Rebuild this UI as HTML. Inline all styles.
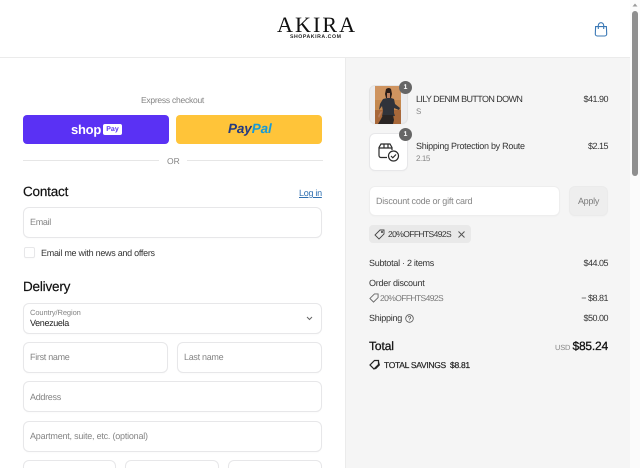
<!DOCTYPE html>
<html><head><meta charset="utf-8"><style>
html,body{margin:0;padding:0;background:#fff}
#p{position:relative;width:640px;height:468px;overflow:hidden;background:#fff;font-family:"Liberation Sans",sans-serif;color:#2a2a2a;text-rendering:geometricPrecision}
.t{position:absolute;white-space:nowrap;line-height:14px;font-size:9px;letter-spacing:-.28px}
.b{position:absolute;box-sizing:border-box;background:#fff;border:1px solid #e7e7e9;border-radius:6px;box-shadow:0 1px 1px rgba(0,0,0,.02)}
.ph{color:#858585;letter-spacing:-.3px}
.r{text-align:right;letter-spacing:-.5px}
.h{font-size:13.5px;line-height:16px;color:#111;letter-spacing:-.2px;-webkit-text-stroke:.2px #111}
.c{font-size:8.5px;letter-spacing:-.6px}
svg{position:absolute;overflow:visible}
</style></head><body><div id="p">
<div style="position:absolute;left:345px;top:57px;width:285px;height:411px;background:#f5f5f5;border-left:1px solid #ebebeb;box-sizing:border-box"></div>
<div style="position:absolute;left:0;top:57px;width:630px;height:1px;background:#ebebeb"></div>

<!-- Logo -->
<div class="t" style="left:277px;top:13px;font:22px/24px 'Liberation Serif',serif;letter-spacing:2.1px;color:#111">AKIRA</div>
<div class="t" style="left:290px;top:33px;font:bold 5.2px/8px 'Liberation Sans',sans-serif;letter-spacing:.55px;color:#222">SHOPAKIRA.COM</div>
<svg style="left:594px;top:22px" width="14" height="15" viewBox="0 0 14 15" fill="none" stroke="#3a78b5" stroke-width="1.1"><path d="M1.6 4.6h10.8l.3 7.4a2 2 0 0 1-2 2H3.3a2 2 0 0 1-2-2z"/><path d="M4.3 7V3.4a2.7 2.7 0 0 1 5.4 0V7"/></svg>

<!-- Scrollbar -->
<div style="position:absolute;left:630px;top:0;width:10px;height:468px;background:#fbfbfb"></div>
<div style="position:absolute;left:632px;top:11px;width:6px;height:165px;border-radius:3px;background:#8f8f8f"></div>
<svg style="left:632px;top:3px" width="6" height="4"><path d="M3 0.5L5.5 3.5H.5z" fill="#9a9a9a"/></svg>

<!-- Express -->
<div class="t" style="left:100px;top:93px;width:145px;text-align:center;color:#858585;font-size:8.5px;letter-spacing:-.25px">Express checkout</div>
<div style="position:absolute;left:23px;top:115px;width:146px;height:29px;background:#5a31f4;border-radius:4px"></div>
<div class="t" style="left:71px;top:121px;font:bold 13px/17px 'Liberation Sans',sans-serif;color:#fff;letter-spacing:-.25px">shop</div>
<div class="t" style="left:103px;top:124px;width:19px;height:11px;background:#fff;border-radius:2px;color:#5a31f4;font:bold 7px/11px 'Liberation Sans',sans-serif;letter-spacing:0;text-align:center">Pay</div>
<div style="position:absolute;left:176px;top:115px;width:146px;height:29px;background:#ffc439;border-radius:4px"></div>
<div class="t" style="left:228px;top:120px;font:italic bold 13.5px/18px 'Liberation Sans',sans-serif;letter-spacing:-.1px;color:#253b80">Pay<span style="color:#179bd7">Pal</span></div>

<div style="position:absolute;left:23px;top:160px;width:136px;height:1px;background:#e6e6e6"></div>
<div style="position:absolute;left:187px;top:160px;width:136px;height:1px;background:#e6e6e6"></div>
<div class="t" style="left:167px;top:154px;color:#858585;font-size:8.5px;letter-spacing:0">OR</div>

<!-- Contact -->
<div class="t h" style="left:23px;top:184px">Contact</div>
<div class="t" style="left:299px;top:186px;color:#2f6fb0;text-decoration:underline">Log in</div>
<div class="b" style="left:23px;top:207px;width:299px;height:31px"></div>
<div class="t ph" style="left:30px;top:215px">Email</div>
<div class="b" style="left:24px;top:247px;width:11px;height:11px;border-radius:2px"></div>
<div class="t" style="left:41px;top:246px;color:#333">Email me with news and offers</div>

<!-- Delivery -->
<div class="t h" style="left:23px;top:279px">Delivery</div>
<div class="b" style="left:23px;top:303px;width:299px;height:31px"></div>
<div class="t" style="left:30px;top:307px;font-size:7.5px;line-height:12px;letter-spacing:-.1px;color:#858585">Country/Region</div>
<div class="t" style="left:30px;top:316px;letter-spacing:-.35px;color:#222">Venezuela</div>
<svg style="left:306px;top:316px" width="7" height="5" fill="none" stroke="#666" stroke-width="1"><path d="M1 1l2.5 2.5L6 1"/></svg>
<div class="b" style="left:23px;top:342px;width:145px;height:31px"></div>
<div class="t ph" style="left:30px;top:350px">First name</div>
<div class="b" style="left:177px;top:342px;width:145px;height:31px"></div>
<div class="t ph" style="left:184px;top:350px">Last name</div>
<div class="b" style="left:23px;top:381px;width:299px;height:31px"></div>
<div class="t ph" style="left:30px;top:390px">Address</div>
<div class="b" style="left:23px;top:421px;width:299px;height:31px"></div>
<div class="t ph" style="left:30px;top:429px;letter-spacing:-.22px">Apartment, suite, etc. (optional)</div>
<div class="b" style="left:23px;top:460px;width:93px;height:31px"></div>
<div class="b" style="left:125px;top:460px;width:94px;height:31px"></div>
<div class="b" style="left:228px;top:460px;width:94px;height:31px"></div>

<!-- Items -->
<div class="b" style="left:369px;top:85px;width:39px;height:39px;background:#ececee;border-color:#e4e4e4;border-radius:6px"></div>
<svg style="left:375px;top:86px" width="26" height="38" viewBox="0 0 26 38">
<rect width="26" height="38" fill="#c4884f"/>
<rect width="26" height="14" fill="#cf9460"/>
<rect y="24" width="26" height="14" fill="#a8683a"/>
<path d="M11 3q3-2 5 0l1 5-1 4h-5l-1-4z" fill="#2b1d18"/>
<path d="M12 7h3v5h-3z" fill="#b97f60"/>
<path d="M8 13l4-1h4l3 1 1 5 5 4-1 2-5-2v5l1 3H7l1-5-1-5-3 4 1-6z" fill="#30333a"/>
<path d="M8 29h10l1 5-1 4H3l3-5z" fill="#2a2524"/>
<path d="M3 30l3-5 1 1-3 6z" fill="#b97f60"/>
</svg>
<div style="position:absolute;left:399px;top:81px;width:13px;height:13px;border-radius:50%;background:#666;color:#fff;font:bold 7px/13px 'Liberation Sans',sans-serif;text-align:center">1</div>

<div class="b" style="left:369px;top:133px;width:39px;height:38px;border-radius:6px"></div>
<svg style="left:378px;top:143px" width="22" height="20" viewBox="0 0 22 20" fill="none" stroke="#2b2b2b" stroke-width="1.2"><path d="M9 14.5H3a2 2 0 0 1-2-2V4.5l2-3.5h9l2 3.5V7"/><path d="M1 5h13M6 1v4h4V1"/><circle cx="15.5" cy="13" r="5"/><path d="M13 13l1.8 1.8 3.2-3.3"/></svg>
<div style="position:absolute;left:399px;top:128px;width:13px;height:13px;border-radius:50%;background:#666;color:#fff;font:bold 7px/13px 'Liberation Sans',sans-serif;text-align:center">1</div>

<div class="t" style="left:416px;top:92px;color:#333;letter-spacing:-.6px">LILY DENIM BUTTON DOWN</div>
<div class="t" style="left:416px;top:105px;font-size:8px;color:#888">S</div>
<div class="t r" style="left:548px;top:92px;width:60px;color:#333">$41.90</div>
<div class="t" style="left:416px;top:139px;color:#333">Shipping Protection by Route</div>
<div class="t" style="left:416px;top:152px;font-size:8px;letter-spacing:-.4px;color:#888">2.15</div>
<div class="t r" style="left:548px;top:139px;width:60px;color:#333">$2.15</div>

<!-- Discount -->
<div class="b" style="left:369px;top:186px;width:191px;height:30px;border-color:#eeeeee"></div>
<div class="t ph" style="left:376px;top:194px;letter-spacing:-.22px">Discount code or gift card</div>
<div class="b" style="left:569px;top:186px;width:39px;height:30px;background:#eeeeee;border-color:#ebebeb"></div>
<div class="t" style="left:569px;top:194px;width:39px;text-align:center;color:#7d7d7d">Apply</div>
<div style="position:absolute;left:369px;top:225px;width:102px;height:18px;background:#e9e9e9;border-radius:4px"></div>
<svg style="left:374px;top:229px" width="11" height="11" viewBox="0 0 11 11" fill="none" stroke="#444" stroke-width=".9"><path d="M6 1h4v4L5 10 1 6z"/><circle cx="8" cy="3" r=".6"/></svg>
<div class="t c" style="left:388px;top:227px;color:#333">20%OFFHTS492S</div>
<svg style="left:458px;top:231px" width="7" height="7" fill="none" stroke="#555" stroke-width="1"><path d="M.5.5l6 6M6.5.5l-6 6"/></svg>

<!-- Totals -->
<div class="t" style="left:369px;top:256px;color:#333">Subtotal · 2 items</div>
<div class="t r" style="left:548px;top:256px;width:60px;color:#333">$44.05</div>
<div class="t" style="left:369px;top:276px;color:#333;letter-spacing:-.25px">Order discount</div>
<svg style="left:369px;top:293px" width="10" height="10" viewBox="0 0 11 11" fill="none" stroke="#666" stroke-width="1"><path d="M6 1h4v4L5 10 1 6z"/></svg>
<div class="t c" style="left:380px;top:291px;color:#777">20%OFFHTS492S</div>
<div class="t r" style="left:548px;top:291px;width:60px;color:#333">− $8.81</div>
<div class="t" style="left:369px;top:311px;color:#333;letter-spacing:-.25px">Shipping</div>
<svg style="left:405px;top:314px" width="9" height="9" viewBox="0 0 9 9" fill="none" stroke="#555" stroke-width=".8"><circle cx="4.5" cy="4.5" r="3.8"/><path d="M3.3 3.5a1.2 1.2 0 1 1 1.6 1.2l-.4.5v.4M4.5 6.5v.4"/></svg>
<div class="t r" style="left:548px;top:311px;width:60px;color:#333">$50.00</div>
<div class="t" style="left:369px;top:338px;font-size:12px;line-height:16px;letter-spacing:-.1px;color:#111;-webkit-text-stroke:.25px #111">Total</div>
<div class="t" style="left:555px;top:341px;font-size:7.5px;letter-spacing:-.2px;color:#888">USD</div>
<div class="t r" style="left:548px;top:338px;width:60px;font-size:12px;line-height:16px;letter-spacing:-.2px;color:#111;-webkit-text-stroke:.3px #111">$85.24</div>
<svg style="left:369px;top:359px" width="11" height="11" viewBox="0 0 11 11" fill="none" stroke="#222" stroke-width="1.2"><path d="M5.5 1.5h4v4l-4.5 4.5-4-4z"/><path d="M9.5 3l.8 3-4 4"/></svg>
<div class="t" style="left:384px;top:358px;font-size:8.5px;letter-spacing:-.3px;color:#222;-webkit-text-stroke:.2px #222">TOTAL SAVINGS&nbsp; $8.81</div>
</div></body></html>
